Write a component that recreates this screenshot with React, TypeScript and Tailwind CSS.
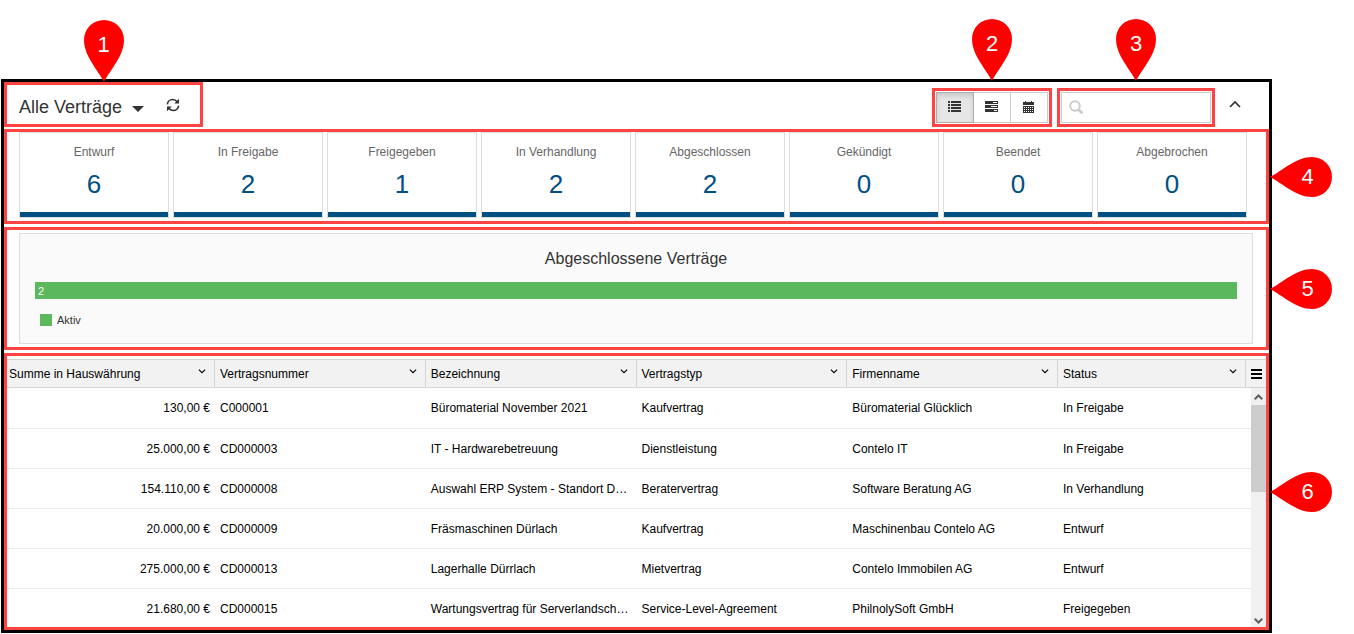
import type { ReactNode } from 'react';

const statusCards = [
  { label: 'Entwurf', count: 6 },
  { label: 'In Freigabe', count: 2 },
  { label: 'Freigegeben', count: 1 },
  { label: 'In Verhandlung', count: 2 },
  { label: 'Abgeschlossen', count: 2 },
  { label: 'Gekündigt', count: 0 },
  { label: 'Beendet', count: 0 },
  { label: 'Abgebrochen', count: 0 },
];

const columns = [
  'Summe in Hauswährung',
  'Vertragsnummer',
  'Bezeichnung',
  'Vertragstyp',
  'Firmenname',
  'Status',
];

const contracts = [
  ['130,00 €', 'C000001', 'Büromaterial November 2021', 'Kaufvertrag', 'Büromaterial Glücklich', 'In Freigabe'],
  ['25.000,00 €', 'CD000003', 'IT - Hardwarebetreuung', 'Dienstleistung', 'Contelo IT', 'In Freigabe'],
  ['154.110,00 €', 'CD000008', 'Auswahl ERP System - Standort D…', 'Beratervertrag', 'Software Beratung AG', 'In Verhandlung'],
  ['20.000,00 €', 'CD000009', 'Fräsmaschinen Dürlach', 'Kaufvertrag', 'Maschinenbau Contelo AG', 'Entwurf'],
  ['275.000,00 €', 'CD000013', 'Lagerhalle Dürrlach', 'Mietvertrag', 'Contelo Immobilen AG', 'Entwurf'],
  ['21.680,00 €', 'CD000015', 'Wartungsvertrag für Serverlandsch…', 'Service-Level-Agreement', 'PhilnolySoft GmbH', 'Freigegeben'],
];

/* Numbered marker whose tip points down at the area below it. */
function PinDown({ n }: { n: number }) {
  return (
    <span className="absolute bottom-full left-1/2 mb-2.5 block h-[62px] w-10 -translate-x-1/2">
      <svg viewBox="0 0 40 62" className="absolute inset-0 h-full w-full" aria-hidden="true">
        <path d="M20 62C14 50 0 36 0 20a20 20 0 0 1 40 0c0 16-14 30-20 42z" fill="#ff0000" />
      </svg>
      <span className="relative block pt-3 text-center text-[22px] leading-[26px] text-white">{n}</span>
    </span>
  );
}

/* Numbered marker whose tip points left at the area beside it. */
function PinLeft({ n }: { n: number }) {
  return (
    <span className="absolute left-full top-1/2 z-10 ml-1 block h-10 w-[62px] -translate-y-1/2">
      <svg viewBox="0 0 62 40" className="absolute inset-0 h-full w-full" aria-hidden="true">
        <path d="M0 20C12 14 26 0 42 0a20 20 0 0 1 0 40C26 40 12 26 0 20z" fill="#ff0000" />
      </svg>
      <span className="relative block pl-[13px] pt-[7px] text-center text-[22px] leading-[26px] text-white">{n}</span>
    </span>
  );
}

function Chevron({ up = false, bold = false, className }: { up?: boolean; bold?: boolean; className: string }) {
  return (
    <svg viewBox="0 0 12 8" className={className} fill="none" stroke="currentColor" aria-hidden="true">
      <path d={up ? 'M1 7l5-5 5 5' : 'M1 1l5 5 5-5'} strokeWidth={bold ? 2.8 : 1.7} />
    </svg>
  );
}

function ListIcon() {
  return (
    <svg viewBox="0 0 13 12" className="h-3 w-[13px]" fill="#333" aria-hidden="true">
      <path d="M0 0h2v2H0zM3 0h10v2H3zM0 3h2v2H0zM3 3h10v2H3zM0 6h2v2H0zM3 6h10v2H3zM0 9h2v2H0zM3 9h10v2H3z" />
    </svg>
  );
}

function TasksIcon() {
  return (
    <svg viewBox="0 0 13 12" className="h-3 w-[13px]" aria-hidden="true">
      <path fill="#333" d="M0 0h13v3H0zM0 4h13v3H0zM0 8h13v3H0z" />
      <path fill="#fff" d="M8 1h4v1H8zM6 5h6v1H6zM9 9h3v1H9z" />
    </svg>
  );
}

function CalendarIcon() {
  return (
    <svg viewBox="0 0 11 12" className="h-3 w-[11px]" aria-hidden="true">
      <path fill="#333" d="M2 0h1v1h5V0h1v1h2v3H0V1h2zM0 5h11v7H0z" />
      <path fill="#fff" d="M1 6h1v1H1zM3 6h1v1H3zM5 6h1v1H5zM7 6h1v1H7zM9 6h1v1H9zM1 8h1v1H1zM3 8h1v1H3zM5 8h1v1H5zM7 8h1v1H7zM9 8h1v1H9zM1 10h1v1H1zM3 10h1v1H3zM5 10h1v1H5zM7 10h1v1H7zM9 10h1v1H9z" />
    </svg>
  );
}

function RefreshIcon() {
  return (
    <svg viewBox="0 0 14 14" className="h-3.5 w-3.5" aria-hidden="true">
      <path
        d="M1.400 6.400C1.600 3.400 4 1.500 6.600 1.500c1.900 0 3.400.8 4.600 2.300M12.600 7.600C12.400 10.600 10 12.500 7.400 12.500c-1.900 0-3.400-.8-4.600-2.300"
        fill="none"
        stroke="#333"
        strokeWidth="1.600"
      />
      <path d="M13 .8v4.700H8.300zM1 13.200V8.500h4.700z" fill="#333" />
    </svg>
  );
}

function Section({ className, children }: { className: string; children: ReactNode }) {
  return <section className={`relative border-[3px] border-[#ff4343] ${className}`}>{children}</section>;
}

function Toolbar() {
  return (
    <header className="flex h-[47px] items-start justify-between">
      <div className="relative flex h-[45px] w-[199px] items-center border-[3px] border-[#ff4343] pl-3">
        <div className="absolute left-1/2 top-[7px]">
          <PinDown n={1} />
        </div>
        <button type="button" className="flex items-center gap-2.5 pt-1 text-lg leading-6 text-[#333]">
          Alle Verträge
          <svg viewBox="0 0 12 6" className="mt-1 h-1.5 w-3" fill="#333" aria-hidden="true">
            <path d="M0 0h12L6 6z" />
          </svg>
        </button>
        <button type="button" aria-label="Aktualisieren" className="ml-[22px] pt-px">
          <RefreshIcon />
        </button>
      </div>
      <div className="flex items-start pr-7 pt-1.5">
        <div className="relative flex h-[39px] w-[120px] border-[3px] border-[#ff4343] p-px">
          <PinDown n={2} />
          <button type="button" aria-label="Liste" aria-pressed="true" className="flex flex-1 items-center justify-center border border-[#adadad] bg-[#e6e6e6] pb-0.5 pr-0.5 shadow-[inset_0_3px_5px_rgba(0,0,0,0.125)]">
            <ListIcon />
          </button>
          <button type="button" aria-label="Aufgaben" className="flex flex-1 items-center justify-center border-y border-[#ccc] pb-0.5 pr-0.5">
            <TasksIcon />
          </button>
          <button type="button" aria-label="Kalender" className="flex flex-1 items-center justify-center border border-[#ccc] pb-0.5 pr-0.5">
            <CalendarIcon />
          </button>
        </div>
        <div className="relative ml-[5px] h-[39px] w-[158px] border-[3px] border-[#ff4343] p-px">
          <PinDown n={3} />
          <label className="flex h-full items-center border border-[#ccc] pb-0.5 pl-[7px]">
            <svg viewBox="0 0 14 14" className="h-3.5 w-3.5 shrink-0" fill="none" stroke="#ccc" strokeWidth="2" aria-hidden="true">
              <circle cx="6" cy="6" r="4.800" />
              <path d="M9.500 9.500l4 4" strokeWidth="2.800" />
            </svg>
            <input type="search" aria-label="Suche" className="ml-2 w-full min-w-0 text-sm outline-none" />
          </label>
        </div>
        <button type="button" aria-label="Einklappen" className="ml-3.5 mt-3 text-[#333]">
          <Chevron up className="h-2 w-3" />
        </button>
      </div>
    </header>
  );
}

function ContractTable() {
  return (
    <div className="flex h-[268px] overflow-hidden">
      <div className="min-w-0 flex-1">
        <table className="w-full table-fixed border-separate border-spacing-0 text-xs text-black">
          <colgroup>
            <col className="w-[208px]" />
            <col />
            <col />
            <col />
            <col />
            <col className="w-[193px]" />
          </colgroup>
          <thead>
            <tr className="h-[29px] bg-[#f2f2f2]">
              {columns.map((name, i) => (
                <th key={name} scope="col" className="border-y border-[#d4d4d4] p-0 text-left font-normal last:pr-[5px]">
                  <div className={`flex h-[27px] items-center justify-between border-r border-[#d4d4d4] pr-2 ${i === 0 ? 'pl-0.5' : 'pl-[5px]'}`}>
                    {name}
                    <button type="button" aria-label={`${name} sortieren`} className="mb-1">
                      <Chevron className="h-[5px] w-2" />
                    </button>
                  </div>
                </th>
              ))}
            </tr>
          </thead>
          <tbody>
            {contracts.map((row) => (
              <tr key={row[1]} className="h-10 first:h-[41px]">
                {row.map((cell, i) => (
                  <td key={i} className="whitespace-nowrap border-b border-[#ebebeb] px-[5px] first:text-right">
                    {cell}
                  </td>
                ))}
              </tr>
            ))}
          </tbody>
        </table>
      </div>
      <div className="flex w-[15px] flex-col">
        <button type="button" aria-label="Tabellenmenü" className="flex h-[29px] items-center border-y border-[#d4d4d4] bg-[#f2f2f2]">
          <svg viewBox="0 0 11 10" className="h-2.5 w-[11px]" fill="#000" aria-hidden="true">
            <path d="M0 0h11v2H0zM0 4h11v2H0zM0 8h11v2H0z" />
          </svg>
        </button>
        <div className="flex flex-1 flex-col bg-[#f0f0f0] text-[#606060]">
          <button type="button" aria-label="Nach oben" className="flex h-[17px] items-center justify-center">
            <Chevron up bold className="h-1.5 w-[9px]" />
          </button>
          <div className="h-[87px] bg-[#cdcdcd]" />
          <button type="button" aria-label="Nach unten" className="mt-auto flex h-3 items-center justify-center">
            <Chevron bold className="h-1.5 w-[9px]" />
          </button>
        </div>
      </div>
    </div>
  );
}

export default function App() {
  return (
    <div className="bg-white pb-px pl-px pr-[82px] pt-[79px] font-['Liberation_Sans',Arial,sans-serif]">
      <main className="border-[3px] border-black">
        <Toolbar />
        <Section className="pb-[3px] pl-3 pr-[19px]">
          <div className="grid grid-cols-8 gap-1">
            {statusCards.map((card) => (
              <div key={card.label} className="border border-[#ddd] text-center">
                <div className="border-b-[5px] border-[#005083] pb-3 pt-2.5">
                  <div className="text-xs leading-[18px] text-[#666]">{card.label}</div>
                  <div className="pt-2 text-[26px] leading-[31px] text-[#005083]">{card.count}</div>
                </div>
              </div>
            ))}
          </div>
          <PinLeft n={4} />
        </Section>
        <Section className="mt-[3px] py-[3px] pl-3 pr-[13px]">
          <div className="border border-[#ddd] bg-[#fafafa] px-[15px] py-[15px] text-[#333]">
            <h2 className="text-center text-base leading-5">Abgeschlossene Verträge</h2>
            <div className="mt-[13px] h-[17px] bg-[#5cb85c] pl-[3px] text-[11px] leading-[18px] text-white">2</div>
            <div className="mt-[13px] flex items-center gap-[5px] pl-[5px] text-[11px] leading-4">
              <span className="h-3 w-3 bg-[#5cb85c]" />
              Aktiv
            </div>
          </div>
          <PinLeft n={5} />
        </Section>
        <Section className="mt-[3px] pt-[3px]">
          <ContractTable />
          <PinLeft n={6} />
        </Section>
      </main>
    </div>
  );
}
